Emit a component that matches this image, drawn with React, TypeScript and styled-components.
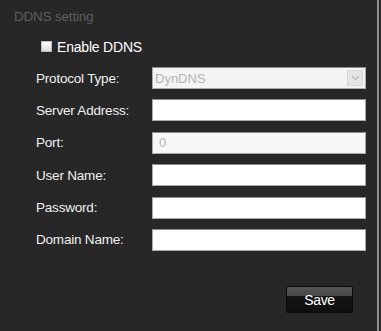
import React from "react";
import styled, { createGlobalStyle } from "styled-components";

const GlobalStyle = createGlobalStyle`
  html, body {
    margin: 0;
    padding: 0;
    background: #272727;
  }
  body {
    font-family: "Liberation Sans", Arial, sans-serif;
  }
`;

const fields = [
  { label: "Server Address:", value: "" },
  { label: "Port:", value: "0", disabled: true },
  { label: "User Name:", value: "" },
  { label: "Password:", value: "" },
  { label: "Domain Name:", value: "" },
];

export default function App() {
  return (
    <>
      <GlobalStyle />
      <Panel>
        <Title>DDNS setting</Title>
        <CheckRow>
          <CheckBox />
          <CheckText>Enable DDNS</CheckText>
        </CheckRow>
        <FormGrid>
          <Label>Protocol Type:</Label>
          <Select>
            <SelectText>DynDNS</SelectText>
            <Arrow>
              <svg width="9" height="6" viewBox="0 0 9 6">
                <path d="M1 1 L4.5 4.5 L8 1" fill="none" stroke="#b8b8b8" strokeWidth="1.3" />
              </svg>
            </Arrow>
          </Select>
          {fields.map((f) => (
            <React.Fragment key={f.label}>
              <Label>{f.label}</Label>
              <Input defaultValue={f.value} disabled={f.disabled} />
            </React.Fragment>
          ))}
        </FormGrid>
        <Footer>
          <SaveButton>Save</SaveButton>
        </Footer>
      </Panel>
    </>
  );
}

const Panel = styled.div`
  width: 379px;
  height: 331px;
  box-sizing: border-box;
  background: #272727;
  border-right: 2px solid #8e8e8e;
  padding-top: 8px;
`;

const Title = styled.div`
  padding-left: 14px;
  height: 17px;
  line-height: 17px;
  font-size: 13.5px;
  color: #5e5e5e;
  letter-spacing: -0.2px;
`;

const CheckRow = styled.div`
  display: flex;
  align-items: center;
  margin: 15px 0 0 41px;
  height: 13px;
`;

const CheckBox = styled.span`
  width: 11px;
  height: 11px;
  background: linear-gradient(#ffffff, #dcdcdc);
  border: 1px solid #bdbdbd;
  box-sizing: border-box;
`;

const CheckText = styled.span`
  margin-left: 5px;
  font-size: 14px;
  color: #ffffff;
  letter-spacing: -0.2px;
`;

const FormGrid = styled.div`
  display: grid;
  grid-template-columns: 116px 214px;
  grid-auto-rows: 22px;
  row-gap: 10.4px;
  margin: 14px 0 0 36px;
  align-items: center;
`;

const Label = styled.div`
  font-size: 13.5px;
  color: #f0f0f0;
  letter-spacing: -0.2px;
`;

const fieldBox = `
  box-sizing: border-box;
  height: 22px;
  border: 1px solid #a9a9a9;
  border-top-color: #8a8a8a;
  background: #ffffff;
`;

const Select = styled.div`
  ${fieldBox}
  display: flex;
  align-items: center;
  background: #f4f4f4;
  padding: 0 2px 0 2px;
`;

const SelectText = styled.span`
  flex: 1;
  font-size: 13px;
  color: #b4b4b4;
`;

const Arrow = styled.span`
  width: 16px;
  height: 16px;
  display: flex;
  align-items: center;
  justify-content: center;
  background: #e6e6e6;
  border: 1px solid #d6d6d6;
  box-sizing: border-box;
`;

const Input = styled.input`
  ${fieldBox}
  width: 214px;
  padding: 0 6px;
  font-family: inherit;
  font-size: 13px;
  color: #333;
  outline: none;

  &:disabled {
    background: #f7f7f7;
    color: #b4b4b4;
  }
`;

const Footer = styled.div`
  display: flex;
  justify-content: flex-end;
  margin-top: 35px;
  padding-right: 24px;
`;

const SaveButton = styled.button`
  width: 67px;
  height: 27px;
  border: 1px solid #0a0a0a;
  border-radius: 2px;
  background: linear-gradient(#555555 0%, #4a4a4a 35%, #151515 36%, #0f0f0f 100%);
  color: #ffffff;
  font-family: inherit;
  font-size: 14px;
  letter-spacing: -0.4px;
  padding: 2px 0 0;
  cursor: pointer;
`;
